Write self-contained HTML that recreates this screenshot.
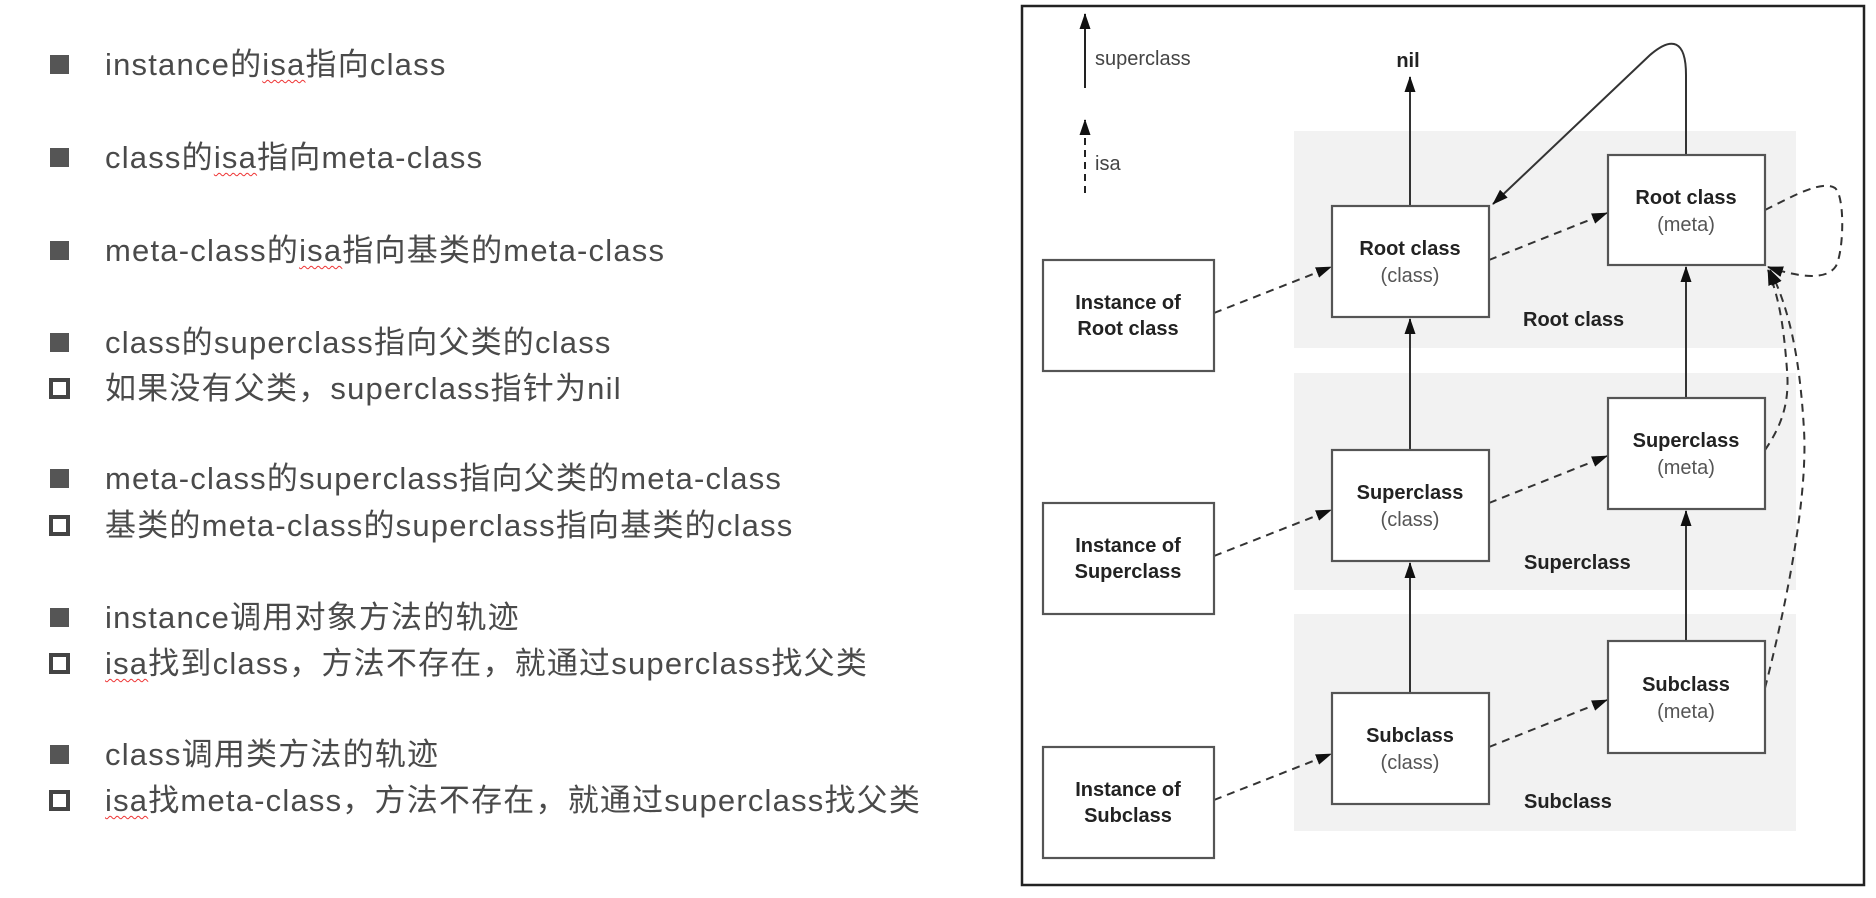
<!DOCTYPE html>
<html><head><meta charset="utf-8"><style>
html,body{margin:0;padding:0;background:#fff;width:1876px;height:898px;overflow:hidden;position:relative}
.l{position:absolute;left:105px;height:40px;line-height:40px;font-family:"Liberation Sans","Noto Sans CJK SC",sans-serif;font-size:31px;letter-spacing:1.2px;color:#4a4a4a;white-space:nowrap}
.b{position:absolute;left:50px;width:19px;height:19px;background:#555}
.h{position:absolute;left:49px;width:13px;height:13px;border:4.5px solid #444;background:#fff}
.w{text-decoration:underline wavy #e33;text-decoration-thickness:1px;text-underline-offset:4px}
</style></head><body>
<div class="b" style="top:55px"></div><div class="l" style="top:45px">instance的<span class="w">isa</span>指向class</div>
<div class="b" style="top:148px"></div><div class="l" style="top:138px">class的<span class="w">isa</span>指向meta-class</div>
<div class="b" style="top:241px"></div><div class="l" style="top:231px">meta-class的<span class="w">isa</span>指向基类的meta-class</div>
<div class="b" style="top:333px"></div><div class="l" style="top:323px">class的superclass指向父类的class</div>
<div class="h" style="top:378px"></div><div class="l" style="top:369px">如果没有父类，superclass指针为nil</div>
<div class="b" style="top:469px"></div><div class="l" style="top:459px">meta-class的superclass指向父类的meta-class</div>
<div class="h" style="top:515px"></div><div class="l" style="top:506px">基类的meta-class的superclass指向基类的class</div>
<div class="b" style="top:608px"></div><div class="l" style="top:598px">instance调用对象方法的轨迹</div>
<div class="h" style="top:653px"></div><div class="l" style="top:644px"><span class="w">isa</span>找到class，方法不存在，就通过superclass找父类</div>
<div class="b" style="top:745px"></div><div class="l" style="top:735px">class调用类方法的轨迹</div>
<div class="h" style="top:790px"></div><div class="l" style="top:781px"><span class="w">isa</span>找meta-class，方法不存在，就通过superclass找父类</div>

<svg width="1876" height="898" style="position:absolute;left:0;top:0" font-family="'Liberation Sans',sans-serif">
<defs>
<marker id="b" markerWidth="16" markerHeight="12" refX="15" refY="6" orient="auto" markerUnits="userSpaceOnUse"><path d="M0,0.5 L16,6 L0,11.5 Z" fill="#111"/></marker>
</defs>
<rect x="1022" y="6" width="842" height="879" fill="#fff" stroke="#222" stroke-width="2.5"/>
<rect x="1294" y="131" width="502" height="217" fill="#f2f2f2"/>
<rect x="1294" y="373" width="502" height="217" fill="#f2f2f2"/>
<rect x="1294" y="614" width="502" height="217" fill="#f2f2f2"/>
<line x1="1085" y1="88" x2="1085" y2="14" stroke="#222" stroke-width="2" marker-end="url(#b)"/>
<text x="1095" y="65" font-size="20" fill="#444">superclass</text>
<line x1="1085" y1="193" x2="1085" y2="120" stroke="#222" stroke-width="2" stroke-dasharray="7,5" marker-end="url(#b)"/>
<text x="1095" y="170" font-size="20" fill="#444">isa</text>
<text x="1408" y="67" font-size="20" font-weight="bold" text-anchor="middle" fill="#222">nil</text>
<g stroke="#333" stroke-width="2" fill="none">
<line x1="1410" y1="206" x2="1410" y2="77" marker-end="url(#b)"/>
<line x1="1410" y1="450" x2="1410" y2="319" marker-end="url(#b)"/>
<line x1="1410" y1="693" x2="1410" y2="563" marker-end="url(#b)"/>
<line x1="1686" y1="398" x2="1686" y2="267" marker-end="url(#b)"/>
<line x1="1686" y1="641" x2="1686" y2="511" marker-end="url(#b)"/>
<path d="M1686,155 L1686,75 C1686,40 1672,36 1650,55 L1493,204" marker-end="url(#b)"/>
</g>
<g stroke="#333" stroke-width="2" fill="none" stroke-dasharray="8,6">
<line x1="1214" y1="313" x2="1331" y2="267" marker-end="url(#b)"/>
<line x1="1214" y1="556" x2="1331" y2="510" marker-end="url(#b)"/>
<line x1="1214" y1="800" x2="1331" y2="754" marker-end="url(#b)"/>
<line x1="1489" y1="260" x2="1607" y2="213" marker-end="url(#b)"/>
<line x1="1489" y1="503" x2="1607" y2="456" marker-end="url(#b)"/>
<line x1="1489" y1="747" x2="1607" y2="700" marker-end="url(#b)"/>
<path d="M1765,210 C1795,195 1822,180 1835,188 C1845,196 1844,250 1836,266 C1826,282 1795,276 1768,267" marker-end="url(#b)"/>
<path d="M1765,450 C1780,428 1790,405 1787,370 C1784,330 1780,300 1768,270" marker-end="url(#b)"/>
<path d="M1765,688 C1785,610 1808,500 1804,430 C1800,360 1790,310 1770,270" marker-end="url(#b)"/>
</g>
<g fill="#fff" stroke="#555" stroke-width="2.2">
<rect x="1043" y="260" width="171" height="111"/>
<rect x="1043" y="503" width="171" height="111"/>
<rect x="1043" y="747" width="171" height="111"/>
<rect x="1332" y="206" width="157" height="111"/>
<rect x="1332" y="450" width="157" height="111"/>
<rect x="1332" y="693" width="157" height="111"/>
<rect x="1608" y="155" width="157" height="110"/>
<rect x="1608" y="398" width="157" height="111"/>
<rect x="1608" y="641" width="157" height="112"/>
</g>
<g font-size="20" text-anchor="middle" fill="#222" font-weight="bold">
<text x="1128" y="309">Instance of</text><text x="1128" y="335">Root class</text>
<text x="1128" y="552">Instance of</text><text x="1128" y="578">Superclass</text>
<text x="1128" y="796">Instance of</text><text x="1128" y="822">Subclass</text>
<text x="1410" y="255">Root class</text>
<text x="1410" y="499">Superclass</text>
<text x="1410" y="742">Subclass</text>
<text x="1686" y="204">Root class</text>
<text x="1686" y="447">Superclass</text>
<text x="1686" y="691">Subclass</text>
</g>
<g font-size="20" text-anchor="middle" fill="#555">
<text x="1410" y="282">(class)</text>
<text x="1410" y="526">(class)</text>
<text x="1410" y="769">(class)</text>
<text x="1686" y="231">(meta)</text>
<text x="1686" y="474">(meta)</text>
<text x="1686" y="718">(meta)</text>
</g>
<g font-size="20" fill="#222" font-weight="bold">
<text x="1523" y="326">Root class</text>
<text x="1524" y="569">Superclass</text>
<text x="1524" y="808">Subclass</text>
</g>
</svg>
</body></html>
